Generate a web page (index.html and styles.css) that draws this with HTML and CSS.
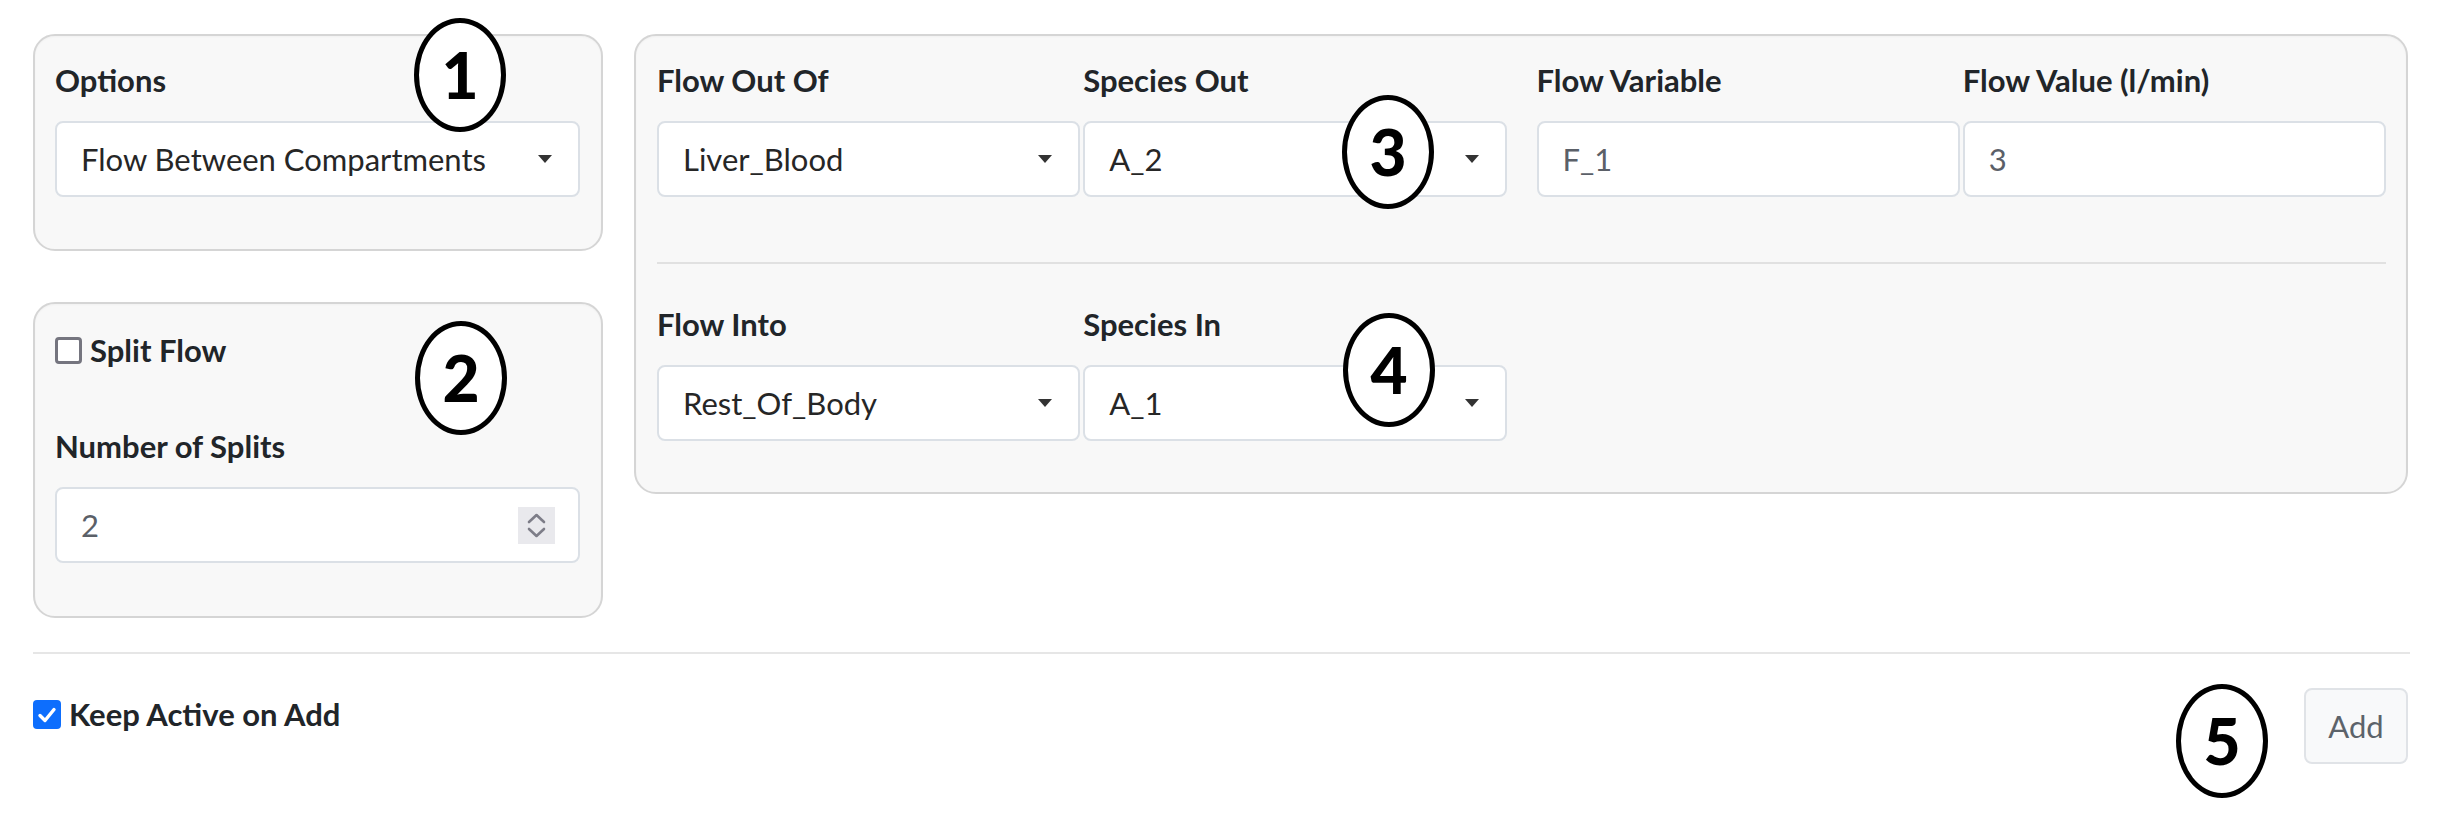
FILE: index.html
```html
<!DOCTYPE html>
<html lang="en">
<head>
<meta charset="utf-8">
<title>Flow Between Compartments</title>
<link rel="stylesheet" href="styles.css">
</head>
<body>
<div class="page">
  <div class="top">
    <div class="left-col">
      <div class="well well-options">
        <label class="label">Options</label>
        <div class="control select"><span class="val">Flow Between Compartments</span><i class="caret"></i></div>
      </div>
      <div class="well well-split">
        <label class="check"><span class="box"></span><span class="check-text">Split Flow</span></label>
        <label class="label label-splits">Number of Splits</label>
        <div class="control input"><span class="val muted">2</span>
          <span class="spin"><svg width="37" height="37" viewBox="0 0 37 37"><polyline points="11,15 18.5,8 26,15" fill="none" stroke="#7d7d88" stroke-width="2.6" stroke-linecap="round" stroke-linejoin="round"/><polyline points="11,22 18.5,29 26,22" fill="none" stroke="#7d7d88" stroke-width="2.6" stroke-linecap="round" stroke-linejoin="round"/></svg></span>
        </div>
      </div>
    </div>
    <div class="well well-flow">
      <div class="pairs">
        <div class="pair">
          <div class="field">
            <label class="label">Flow Out Of</label>
            <div class="control select"><span class="val">Liver_Blood</span><i class="caret"></i></div>
          </div>
          <div class="field">
            <label class="label">Species Out</label>
            <div class="control select"><span class="val">A_2</span><i class="caret"></i></div>
          </div>
        </div>
        <div class="pair">
          <div class="field">
            <label class="label">Flow Variable</label>
            <div class="control input"><span class="val muted">F_1</span></div>
          </div>
          <div class="field">
            <label class="label">Flow Value (l/min)</label>
            <div class="control input"><span class="val muted">3</span></div>
          </div>
        </div>
      </div>
      <hr class="inner-rule">
      <div class="pairs">
        <div class="pair">
          <div class="field">
            <label class="label">Flow Into</label>
            <div class="control select"><span class="val">Rest_Of_Body</span><i class="caret"></i></div>
          </div>
          <div class="field">
            <label class="label">Species In</label>
            <div class="control select"><span class="val">A_1</span><i class="caret"></i></div>
          </div>
        </div>
        <div class="pair"></div>
      </div>
    </div>
  </div>
  <hr class="sep">
  <div class="footer">
    <label class="check check-on"><span class="box"><svg width="28" height="28" viewBox="0 0 28 28"><polyline points="7,14.5 12,19.5 21,8.5" fill="none" stroke="#fff" stroke-width="3.4" stroke-linecap="round" stroke-linejoin="round"/></svg></span><span class="check-text">Keep Active on Add</span></label>
    <button class="btn" type="button">Add</button>
  </div>

  <span class="anno anno-1">1</span>
  <span class="anno anno-2">2</span>
  <span class="anno anno-3">3</span>
  <span class="anno anno-4">4</span>
  <span class="anno anno-5">5</span>
</div>
</body>
</html>
```

FILE: styles.css
```css
* { box-sizing: border-box; }
html, body { margin: 0; padding: 0; background: #fff; }
body {
  font-family: Lato, "Liberation Sans", sans-serif;
  color: #212529;
  width: 2442px;
  height: 825px;
  overflow: hidden;
}
.page {
  position: relative;
  padding: 34px 34px 0 33px;
}
.top {
  display: flex;
  align-items: flex-start;
  gap: 31px;
}
.left-col {
  width: 570px;
  flex: none;
  display: flex;
  flex-direction: column;
  gap: 51px;
}
.well {
  background: #f8f8f8;
  border: 2px solid #d5d5d5;
  border-radius: 22px;
  padding: 26px 21px 0 20px;
  box-shadow: inset 0 1px 2px rgba(0,0,0,0.03);
}
.well-options { height: 217px; }
.well-split { height: 316px; }
.well-flow { flex: 1; height: 460px; padding: 26px 20px 0 21px; }

.label {
  display: block;
  font-weight: 700;
  font-size: 31px;
  line-height: 36px;
  height: 40px;
  margin-bottom: 19px;
  white-space: nowrap;
  color: #212529;
}
.label-splits { margin-top: 58px; }

.control {
  height: 76px;
  background: #fff;
  border: 2px solid #dbe0e6;
  border-radius: 8px;
  display: flex;
  align-items: center;
  padding: 0 26px 0 24px;
  font-size: 31px;
  color: #262626;
}
.control .val { flex: 1; white-space: nowrap; }
.control .muted { color: #5b6068; }
.caret {
  width: 0;
  height: 0;
  border-top: 8px solid #333;
  border-left: 7px solid transparent;
  border-right: 7px solid transparent;
}
.spin {
  width: 37px;
  height: 37px;
  background: #e9e9ed;
  display: block;
  margin-right: -3px;
}
.spin svg { display: block; }

.pairs { display: flex; gap: 30px; }
.pair { flex: 1; display: flex; gap: 3px; }
.field { flex: 1; min-width: 0; }

.inner-rule {
  border: 0;
  border-top: 2px solid #e1e1e1;
  margin: 65px 0 42px;
  height: 0;
}

.check {
  display: flex;
  align-items: center;
  height: 40px;
  gap: 8px;
  font-weight: 700;
  font-size: 31px;
  white-space: nowrap;
}
.check .box {
  width: 27px;
  height: 27px;
  border: 3px solid #75757f;
  border-radius: 4px;
  background: #fff;
  flex: none;
  display: block;
}
.check-on .box {
  width: 28px;
  height: 29px;
  border: 0;
  background: #0d6efd;
  border-radius: 4px;
}
.check-on .box svg { display: block; margin-top: 1px; }

.sep {
  border: 0;
  border-top: 2px solid #e6e6e6;
  margin: 34px -2px 0 0;
  height: 0;
}
.footer {
  display: flex;
  justify-content: space-between;
  align-items: flex-start;
  margin-top: 34px;
}
.footer .check { margin-top: 6px; }
.btn {
  width: 104px;
  height: 76px;
  border: 2px solid #e0e3e7;
  border-radius: 8px;
  background: #f8f9fa;
  color: #5c636a;
  font-family: Lato, "Liberation Sans", sans-serif;
  font-size: 31px;
  padding: 0;
}

.anno {
  position: absolute;
  width: 92px;
  height: 114px;
  border: 5px solid #000;
  border-radius: 50%;
  background: #fff;
  display: flex;
  align-items: center;
  justify-content: center;
  font-family: Lato, "Liberation Sans", sans-serif;
  font-weight: 900;
  font-size: 64px;
  color: #000;
  line-height: 1;
}
.anno-1 { left: 414px; top: 18px; }
.anno-2 { left: 415px; top: 321px; }
.anno-3 { left: 1342px; top: 95px; }
.anno-4 { left: 1343px; top: 313px; }
.anno-5 { left: 2176px; top: 684px; }
```
